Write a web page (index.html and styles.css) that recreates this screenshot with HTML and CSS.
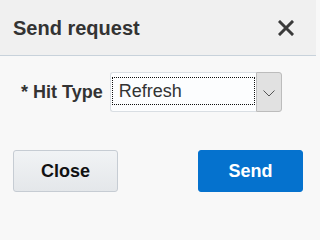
FILE: index.html
```html
<!DOCTYPE html>
<html>
<head>
<meta charset="utf-8">
<link rel="stylesheet" href="styles.css">
</head>
<body>
<div class="dialog">
  <header class="header">
    <h1 class="title">Send request</h1>
    <button class="close-x" aria-label="Close">
      <svg width="16" height="16" viewBox="0 0 16 16"><path d="M2 2L14 14M14 2L2 14" stroke="#3a3a3a" stroke-width="3" stroke-linecap="square" fill="none"/></svg>
    </button>
  </header>
  <main class="content">
    <div class="field">
      <label class="label">* Hit Type</label>
      <div class="select">
        <div class="value"><span class="focus">Refresh</span></div>
        <div class="arrow">
          <svg width="12" height="7" viewBox="0 0 12 7"><polyline points="0.5,0.5 6,6 11.5,0.5" fill="none" stroke="#555" stroke-width="1"/></svg>
        </div>
      </div>
    </div>
  </main>
  <footer class="footer">
    <button class="btn btn-close">Close</button>
    <button class="btn btn-send">Send</button>
  </footer>
</div>
</body>
</html>
```
FILE: styles.css
```css
html, body {
  margin: 0;
  padding: 0;
}
body {
  width: 316px;
  height: 206px;
  background: #f8f8f8;
  font-family: "Liberation Sans", Arial, sans-serif;
  overflow: hidden;
}
.dialog {
  display: flex;
  flex-direction: column;
}
.header {
  height: 55px;
  background: #f0f0f0;
  border-bottom: 1px solid #c8d2db;
  display: flex;
  align-items: center;
  justify-content: space-between;
  padding: 0 22px 0 13px;
}
.title {
  margin: 0;
  font-size: 20px;
  font-weight: bold;
  color: #333;
  padding-top: 1px;
}
.close-x {
  border: 0;
  background: none;
  padding: 0;
  width: 16px;
  height: 16px;
  display: flex;
}
.content {
  padding: 16px 0 0 21px;
}
.field {
  display: flex;
  align-items: center;
  gap: 7px;
}
.label {
  font-size: 18px;
  font-weight: bold;
  color: #333;
  padding-top: 0px;
}
.select {
  display: flex;
  height: 40px;
}
.value {
  width: 146px;
  border: 1px solid #d9dee3;
  border-right: 0;
  border-radius: 3px 0 0 3px;
  background: #fcfdfe;
  padding: 4px 1px 6px 1px;
  box-sizing: border-box;
  display: flex;
}
.focus {
  flex: 1;
  border: 1px dotted #111;
  font-size: 18px;
  color: #333;
  line-height: 25px;
  padding: 1px 0 0 6px;
}
.arrow {
  width: 26px;
  box-sizing: border-box;
  border: 1px solid #bcbcbc;
  border-radius: 0 3px 3px 0;
  background: #e1e1e1;
  display: flex;
  align-items: center;
  justify-content: center;
  padding: 2px 0 0 1px;
}
.arrow svg {
  display: block;
}
.footer {
  margin-top: 38px;
  padding: 0 13px;
  display: flex;
  justify-content: space-between;
}
.btn {
  width: 105px;
  height: 42px;
  border-radius: 3px;
  font-family: "Liberation Sans", Arial, sans-serif;
  font-size: 18px;
  font-weight: bold;
  padding: 0;
}
.btn-close {
  background: linear-gradient(#f1f3f5, #e4e7ea);
  border: 1px solid #c6ccd3;
  color: #111;
}
.btn-send {
  background: #0572ce;
  border: 1px solid #0572ce;
  color: #fff;
}
```
